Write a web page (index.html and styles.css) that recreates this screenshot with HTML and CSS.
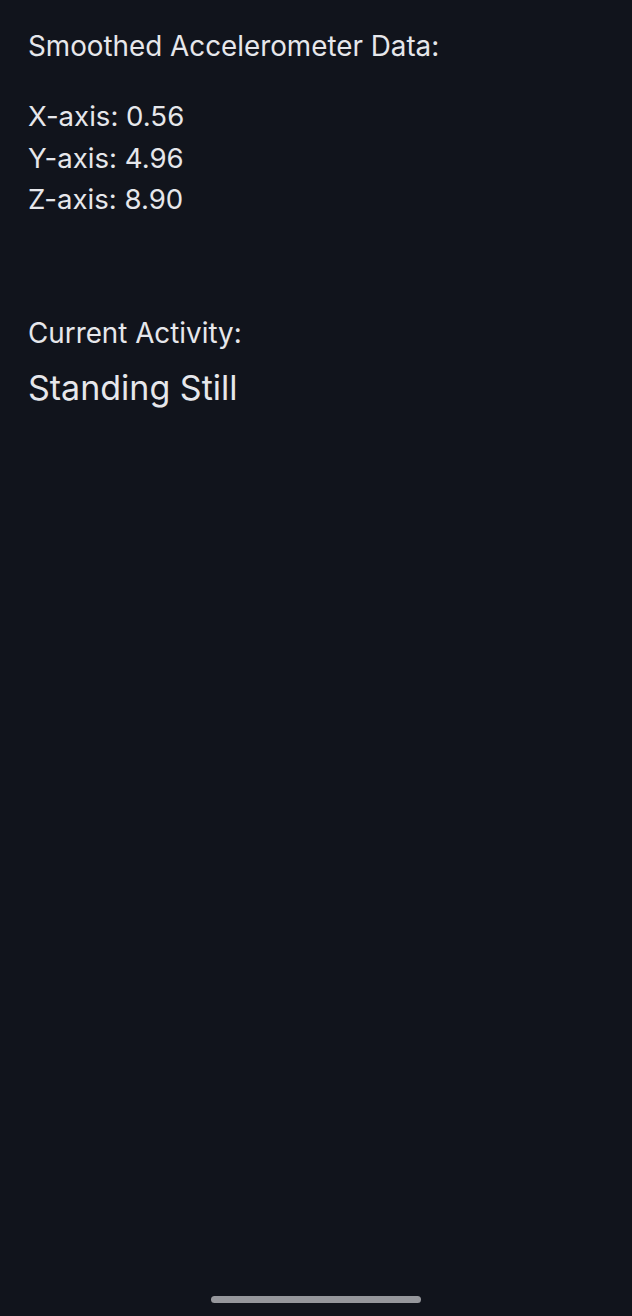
FILE: index.html
```html
<!DOCTYPE html>
<html>
<head>
<meta charset="utf-8">
<link rel="stylesheet" href="styles.css">
</head>
<body>
<main class="screen">
  <section class="data">
    <h2 class="label">Smoothed Accelerometer Data:</h2>
    <div class="axes">
      <p class="axis">X-axis: 0.56</p>
      <p class="axis">Y-axis: 4.96</p>
      <p class="axis">Z-axis: 8.90</p>
    </div>
  </section>
  <section class="activity">
    <h2 class="label">Current Activity:</h2>
    <p class="state">Standing Still</p>
  </section>
  <div class="home-bar"></div>
</main>
</body>
</html>
```
FILE: styles.css
```css
html, body {
  margin: 0;
  padding: 0;
  background: #11141c;
}
.screen {
  height: 1316px;
  box-sizing: border-box;
  padding: 28px 28px 0;
  display: flex;
  flex-direction: column;
  font-family: Inter, "Noto Sans", sans-serif;
  color: #e6e7eb;
}
.label {
  margin: 0;
  font-size: 27.8px;
  font-weight: 400;
  line-height: 36px;
}
.axes {
  margin-top: 32px;
  display: flex;
  flex-direction: column;
}
.axis {
  margin: 0;
  font-size: 27.6px;
  line-height: 41.5px;
}
.activity {
  margin-top: 94px;
}
.state {
  margin: 17px 0 0;
  font-size: 34px;
  line-height: 40px;
}
.home-bar {
  margin: auto auto 13px;
  width: 210px;
  height: 7px;
  border-radius: 4px;
  background: #96979c;
}
```
